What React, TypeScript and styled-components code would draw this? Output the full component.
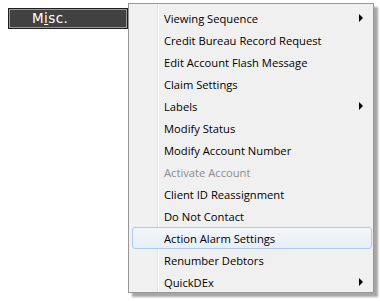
import * as React from "react";
import styled, { createGlobalStyle } from "styled-components";

const GlobalStyle = createGlobalStyle`
  html, body {
    margin: 0;
    padding: 0;
    background: #ffffff;
  }
`;

type Item = { label: string; sub?: boolean; disabled?: boolean; active?: boolean };

const items: Item[] = [
  { label: "Viewing Sequence", sub: true },
  { label: "Credit Bureau Record Request" },
  { label: "Edit Account Flash Message" },
  { label: "Claim Settings" },
  { label: "Labels", sub: true },
  { label: "Modify Status" },
  { label: "Modify Account Number" },
  { label: "Activate Account", disabled: true },
  { label: "Client ID Reassignment" },
  { label: "Do Not Contact" },
  { label: "Action Alarm Settings", active: true },
  { label: "Renumber Debtors" },
  { label: "QuickDEx", sub: true },
];

export default function App() {
  return (
    <>
      <GlobalStyle />
      <Page>
        <MiscButton>
          M<u>i</u>sc.
        </MiscButton>
        <Menu>
          {items.map(item => (
            <Row key={item.label} $active={item.active} $disabled={item.disabled}>
              <Label>{item.label}</Label>
              {item.sub && <Arrow />}
            </Row>
          ))}
        </Menu>
      </Page>
    </>
  );
}

const Page = styled.div`
  display: flex;
  align-items: flex-start;
  padding: 3px 0 0 8px;
  width: 380px;
  height: 301px;
  box-sizing: border-box;
`;

const MiscButton = styled.div`
  margin-top: 5px;
  width: 118px;
  height: 19px;
  box-sizing: content-box;
  border: 1px solid #1e1e1e;
  box-shadow: inset 0 0 0 1px #9a9a9a;
  background: #414141;
  color: #ffffff;
  font-family: Verdana, "DejaVu Sans", sans-serif;
  font-size: 13.5px;
  line-height: 19px;
  text-indent: 23px;
  letter-spacing: 0.4px;
`;

const Menu = styled.div`
  width: 246px;
  height: 290px;
  box-sizing: border-box;
  border: 1px solid #979797;
  background: linear-gradient(to right, #f1f1f1 0 28px, #e2e3e3 28px 29px, #ffffff 29px 30px, #f0f0f0 30px);
  box-shadow: 4px 4px 2px rgba(0, 0, 0, 0.35);
  padding: 3px 1px 0 3px;
  font-family: "Open Sans", "Noto Sans", sans-serif;
  font-size: 11.2px;
`;

const Row = styled.div<{ $active?: boolean; $disabled?: boolean }>`
  display: flex;
  align-items: center;
  justify-content: space-between;
  height: 22px;
  box-sizing: border-box;
  padding: 0 8px 0 31px;
  border: 1px solid ${p => (p.$active ? "#aeccea" : "transparent")};
  border-radius: 3px;
  background: ${p => (p.$active ? "linear-gradient(to bottom, #f2f6fb, #e6eef8)" : "transparent")};
  color: ${p => (p.$disabled ? "#8d8d8d" : "#000000")};
`;

const Label = styled.span`
  white-space: nowrap;
`;

const Arrow = styled.span`
  width: 0;
  height: 0;
  border-top: 4px solid transparent;
  border-bottom: 4px solid transparent;
  border-left: 4px solid #000000;
`;
